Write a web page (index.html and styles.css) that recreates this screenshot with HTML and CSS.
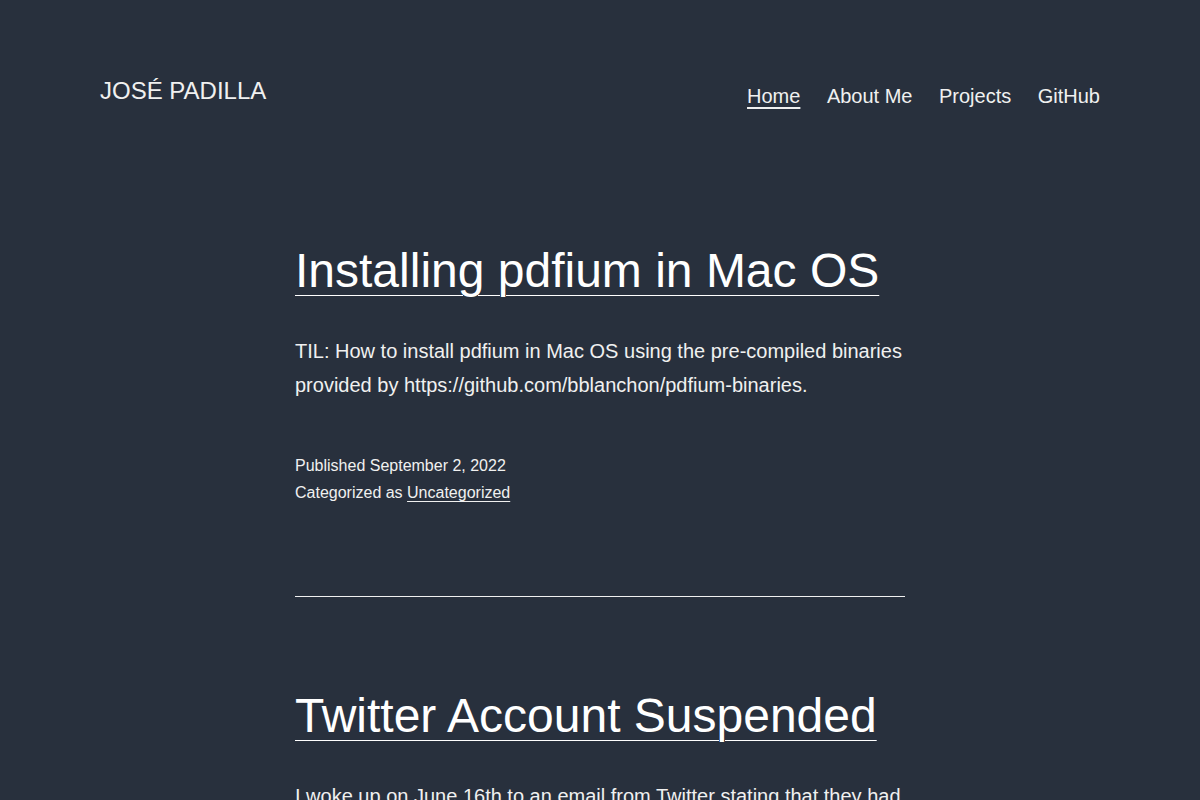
FILE: index.html
```html
<!DOCTYPE html>
<html lang="en">
<head>
  <meta charset="UTF-8">
  <title>José Padilla</title>
  <meta name="viewport" content="width=device-width, initial-scale=1.0">
  <link rel="stylesheet" href="styles.css">
</head>
<body>

  <header class="site-header">
    <p class="site-title">José Padilla</p>
    <nav class="primary-nav">
      <a href="#" class="current">Home</a>
      <a href="#">About Me</a>
      <a href="#">Projects</a>
      <a href="#">GitHub</a>
    </nav>
  </header>

  <main class="site-main">
    <article class="post">
      <h2 class="entry-title"><a href="#">Installing pdfium in Mac OS</a></h2>
      <div class="entry-content">
        <p>TIL: How to install pdfium in Mac OS using the pre-compiled binaries provided by https://github.com/bblanchon/pdfium-binaries.</p>
      </div>
      <footer class="entry-footer">
        <div>Published September 2, 2022</div>
        <div>Categorized as <a href="#">Uncategorized</a></div>
      </footer>
    </article>

    <hr class="post-separator">

    <article class="post">
      <h2 class="entry-title"><a href="#">Twitter Account Suspended</a></h2>
      <div class="entry-content">
        <p>I woke up on June 16th to an email from Twitter stating that they had suspended my account for violating their rules. I was confused since I barely use it anymore.</p>
      </div>
    </article>
  </main>

</body>
</html>
```

FILE: styles.css
```css
* {
  box-sizing: border-box;
}

body {
  margin: 0;
  padding: 0;
  background-color: #28303d;
  color: #f0f0f0;
  font-family: 'Liberation Sans', Arial, sans-serif;
}

a {
  color: #f0f0f0;
}

.site-header {
  max-width: 1000px;
  margin: 0 auto;
  padding-top: 72px;
  display: flex;
  justify-content: space-between;
  align-items: flex-start;
}

.site-title {
  margin: 0;
  font-size: 24px;
  line-height: 38px;
  text-transform: uppercase;
}

.primary-nav {
  display: flex;
  gap: 26.5px;
  font-size: 20px;
  line-height: 30px;
  padding-top: 9px;
}

.primary-nav a {
  text-decoration: none;
}

.primary-nav a.current {
  text-decoration: underline;
  text-underline-offset: 4px;
  text-decoration-thickness: 2px;
}

.site-main {
  max-width: 610px;
  margin: 0 auto;
  padding-top: 129px;
}

.entry-title {
  margin: 0;
  font-size: 48px;
  font-weight: normal;
  line-height: 62px;
  color: #fff;
}

.entry-title a {
  color: #fff;
  text-decoration: underline;
  text-decoration-thickness: 1px;
  text-underline-offset: 8px;
}

.entry-content {
  font-size: 20px;
  line-height: 34px;
  margin-top: 32px;
}

.entry-content p {
  margin: 0;
}

.entry-footer {
  margin-top: 50px;
  font-size: 16px;
  line-height: 27px;
}

.entry-footer a {
  text-underline-offset: 3px;
}

.post-separator {
  margin: 90px 0 88px;
  border: none;
  border-top: 1px solid #f0f0f0;
}
```
